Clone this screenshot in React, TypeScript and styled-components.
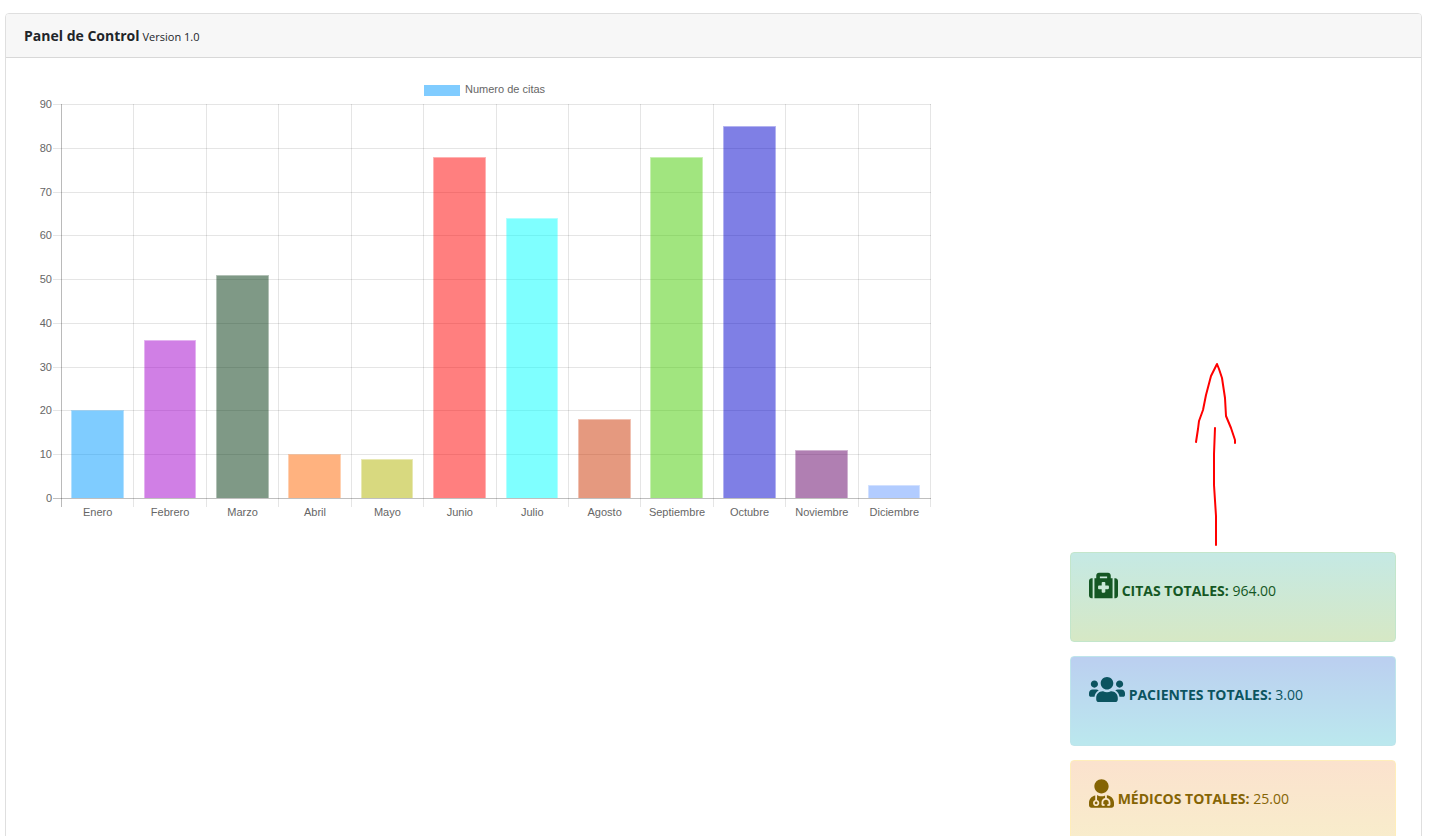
import React from 'react';
import styled, { createGlobalStyle } from 'styled-components';
import { FaMedkit, FaUsers, FaUserMd } from 'react-icons/fa';

const GlobalStyle = createGlobalStyle`
  *, *::before, *::after { box-sizing: border-box; }
  body {
    margin: 0;
    background: #fff;
    color: #212529;
    font-family: 'Segoe UI', 'Open Sans', 'Noto Sans', sans-serif;
    font-size: 14px;
    line-height: 22px;
  }
`;

const Page = styled.main`
  padding: 13px 8px 24px 5px;
`;

const Card = styled.section`
  border: 1px solid #dfdfdf;
  border-radius: 4px;
  background: #fff;
`;

const CardHeader = styled.header`
  display: flex;
  align-items: baseline;
  gap: 3px;
  padding: 11px 18px 10px;
  border-bottom: 1px solid #d8d8d8;
  border-radius: 3px 3px 0 0;
  background: #f7f7f7;
`;

const Title = styled.h1`
  margin: 0;
  font-size: 14px;
  line-height: 22px;
  font-weight: 700;
`;

const Version = styled.small`
  font-size: 11px;
  line-height: 20px;
`;

const CardBody = styled.div`
  display: flex;
  flex-direction: column;
  gap: 30px;
  padding: 18px 25px 24px 32px;
`;

const Chart = styled.svg`
  display: block;
  width: 100%;
  max-width: 893px;
  height: auto;
  font-family: 'Liberation Sans', Arial, sans-serif;
  font-size: 11px;
  fill: #666;
`;

const Stats = styled.div`
  position: relative;
  align-self: flex-end;
  display: flex;
  flex-direction: column;
  gap: 14px;
  width: 100%;
  max-width: 326px;
`;

const Arrow = styled.svg`
  position: absolute;
  left: 120px;
  bottom: 100%;
  width: 50px;
  height: 192px;
  fill: none;
  stroke: #f00;
  stroke-width: 2;
  stroke-linecap: round;
  stroke-linejoin: round;
  pointer-events: none;
`;

type Tone = 'success' | 'info' | 'warning';

const tones: Record<Tone, { text: string; border: string; from: string; to: string }> = {
  success: { text: '#155724', border: '#c3e6cb', from: '#c5e9e4', to: '#d6e8c5' },
  info: { text: '#0c5460', border: '#bee5eb', from: '#bbcff0', to: '#bbe8ee' },
  warning: { text: '#856404', border: '#ffeeba', from: '#fbe2ce', to: '#f8eecb' },
};

const StatCard = styled.div<{ $tone: Tone; $iconWidth: number }>`
  min-height: 90px;
  padding: 18px;
  border: 1px solid ${(p) => tones[p.$tone].border};
  border-radius: 4px;
  color: ${(p) => tones[p.$tone].text};
  background: linear-gradient(${(p) => tones[p.$tone].from}, ${(p) => tones[p.$tone].to});

  svg {
    width: ${(p) => p.$iconWidth}px;
    height: 29px;
    vertical-align: -4px;
  }
`;

const StatText = styled.p`
  margin: 0;
`;

const months = [
  { name: 'Enero', value: 20, color: '#0099ff' },
  { name: 'Febrero', value: 36, color: '#a200cc' },
  { name: 'Marzo', value: 51, color: '#00330d' },
  { name: 'Abril', value: 10, color: '#ff6600' },
  { name: 'Mayo', value: 9, color: '#b2b400' },
  { name: 'Junio', value: 78, color: '#ff0000' },
  { name: 'Julio', value: 64, color: '#00ffff' },
  { name: 'Agosto', value: 18, color: '#cc3300' },
  { name: 'Septiembre', value: 78, color: '#44cc00' },
  { name: 'Octubre', value: 85, color: '#0000cc' },
  { name: 'Noviembre', value: 11, color: '#620066' },
  { name: 'Diciembre', value: 3, color: '#6699ff' },
];

const plot = { left: 23, right: 892, top: 28, bottom: 422 };
const step = (plot.right - plot.left) / months.length;
const xAt = (i: number) => Math.round(plot.left + i * step);
const yAt = (v: number) => Math.round(plot.bottom - (v * (plot.bottom - plot.top)) / 90);
const ticks = [0, 10, 20, 30, 40, 50, 60, 70, 80, 90];
const halfBar = (step * 0.8 * 0.9) / 2;

function BarChart() {
  return (
    <Chart viewBox="0 0 893 446" role="img" aria-label="Numero de citas">
      <rect x={386} y={9} width={36} height={11} fill="#80ccff" />
      <text x={427} y={17}>Numero de citas</text>
      {ticks.map((t) => (
        <g key={t}>
          <rect
            x={15}
            y={yAt(t)}
            width={plot.right - 14}
            height={1}
            fill="#000"
            fillOpacity={t === 0 ? 0.25 : 0.1}
          />
          <text x={14} y={yAt(t) + 4} textAnchor="end">{t}</text>
        </g>
      ))}
      {Array.from({ length: months.length + 1 }, (_, i) => (
        <rect
          key={i}
          x={xAt(i)}
          y={plot.top}
          width={1}
          height={plot.bottom - plot.top + 9}
          fill="#000"
          fillOpacity={i === 0 ? 0.27 : 0.1}
        />
      ))}
      {months.map((m, i) => {
        const center = plot.left + (i + 0.5) * step;
        const x = Math.round(center - halfBar);
        const right = Math.ceil(center + halfBar);
        const y = yAt(m.value);
        return (
          <g key={m.name}>
            <rect
              x={x + 1}
              y={y + 1}
              width={right - x - 2}
              height={plot.bottom - y - 1}
              fill={m.color}
              fillOpacity={0.5}
            />
            <path
              d={`M${x + 0.5} ${plot.bottom}V${y + 0.5}H${right - 0.5}V${plot.bottom}`}
              fill="none"
              stroke={m.color}
              strokeOpacity={0.3}
            />
            <text x={center + 0.5} y={440} textAnchor="middle">{m.name}</text>
          </g>
        );
      })}
    </Chart>
  );
}

const stats = [
  { tone: 'success' as Tone, Icon: FaMedkit, iconWidth: 29, label: 'CITAS TOTALES:', value: '964.00' },
  { tone: 'info' as Tone, Icon: FaUsers, iconWidth: 36, label: 'PACIENTES TOTALES:', value: '3.00' },
  { tone: 'warning' as Tone, Icon: FaUserMd, iconWidth: 25, label: 'MÉDICOS TOTALES:', value: '25.00' },
];

export default function App() {
  return (
    <>
      <GlobalStyle />
      <Page>
        <Card>
          <CardHeader>
            <Title>Panel de Control</Title>
            <Version>Version 1.0</Version>
          </CardHeader>
          <CardBody>
            <BarChart />
            <Stats>
              <Arrow viewBox="0 0 50 192" aria-hidden="true">
                <path d="M6 82L8 69L9 61L13 50L16 35L21 16L27 4L29 9L32 18L35 38L36 56L41 68L45 80V83" />
                <path d="M25 68L24 94V125L26 156V185" />
              </Arrow>
              {stats.map(({ tone, Icon, iconWidth, label, value }) => (
                <StatCard key={tone} $tone={tone} $iconWidth={iconWidth}>
                  <StatText>
                    <Icon aria-hidden="true" /> <strong>{label}</strong> {value}
                  </StatText>
                </StatCard>
              ))}
            </Stats>
          </CardBody>
        </Card>
      </Page>
    </>
  );
}
